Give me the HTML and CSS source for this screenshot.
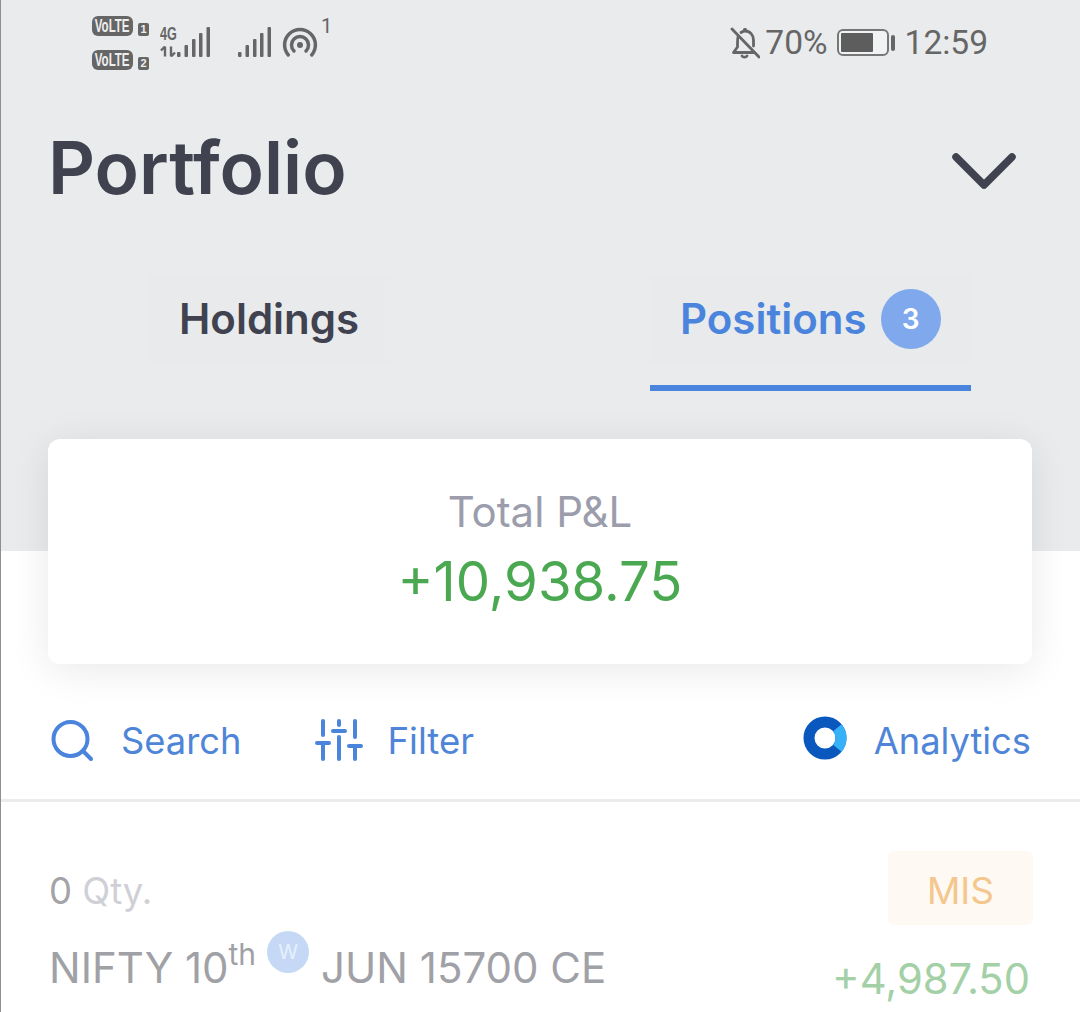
FILE: index.html
```html
<!DOCTYPE html>
<html lang="en">
<head>
<meta charset="utf-8">
<title>Portfolio</title>
<link rel="stylesheet" href="styles.css">
</head>
<body>
<div class="screen">
  <header class="top">
    <div class="status">
      <div class="status-left">
        <div class="volte-stack">
          <div class="volte-row"><span class="volte"><span class="volte-text">VoLTE</span></span><span class="sim">1</span></div>
          <div class="volte-row"><span class="volte"><span class="volte-text">VoLTE</span></span><span class="sim">2</span></div>
        </div>
        <div class="net">
          <span class="net-4g">4G</span>
          <svg class="net-arrows" width="17" height="11" viewBox="0 0 17 11"><path d="M5 0.500V10.500M5 0.500L1 4.500M11 0.500V10.500M11 10.500L15 6.500" fill="none" stroke="#666" stroke-width="2.400"/></svg>
        </div>
        <svg class="sig1" width="33" height="31" viewBox="0 0 33 31"><g fill="#666"><rect x="0" y="25" width="3.500" height="5" rx="1"/><rect x="7.500" y="18" width="3.500" height="12" rx="1"/><rect x="15" y="12" width="3.500" height="18" rx="1"/><rect x="22" y="6" width="3.500" height="24" rx="1"/><rect x="29.500" y="0" width="3.500" height="30" rx="1"/></g></svg>
        <svg class="sig2" width="33" height="31" viewBox="0 0 33 31"><g fill="#666"><rect x="0" y="25" width="3.500" height="5" rx="1"/><rect x="7.500" y="18" width="3.500" height="12" rx="1"/><rect x="15" y="12" width="3.500" height="18" rx="1"/><rect x="22" y="6" width="3.500" height="24" rx="1"/><rect x="29.500" y="0" width="3.500" height="30" rx="1"/></g></svg>
        <svg class="hotspot" width="36" height="32" viewBox="0 0 36 32"><g fill="none" stroke="#666" stroke-width="3.500" stroke-linecap="round"><path d="M6.300 29A15.400 15.400 0 1 1 29.700 29"/><path d="M12 25A8.500 8.500 0 1 1 24 25"/></g><circle cx="18" cy="19" r="3" fill="#666"/></svg>
        <span class="hot-count">1</span>
      </div>
      <div class="status-right">
        <svg class="bell" width="30" height="32" viewBox="0 0 30 32"><g fill="none" stroke="#666" stroke-width="2.800" stroke-linecap="round" stroke-linejoin="round"><path d="M2 2L29 30"/><path d="M8 10C7.500 12 7.500 14 7.500 16V20L3.500 25.500H24"/><path d="M11 5.500C12.500 4.500 14 4 15 4C20 4 23.500 8 23.500 13V19"/><path d="M12 29C13 30.500 16 30.500 17 29"/><path d="M14.500 2.500H15.500"/></g></svg>
        <span class="st-text pct">70%</span>
        <span class="batt"><span class="batt-fill"></span></span><span class="batt-cap"></span>
        <span class="st-text time">12:59</span>
      </div>
    </div>
    <div class="title-row">
      <h1 class="title">Portfolio</h1>
      <svg class="chev" width="64" height="38" viewBox="0 0 64 38"><path d="M4 5L32 33L60 5" fill="none" stroke="#40424f" stroke-width="7.500" stroke-linecap="round" stroke-linejoin="round"/></svg>
    </div>
    <nav class="tabs">
      <div class="tab"><span class="tab-label">Holdings</span></div>
      <div class="tab active"><span class="tab-label">Positions</span><span class="badge">3</span></div>
    </nav>
  </header>

  <section class="card">
    <div class="card-label">Total P&amp;L</div>
    <div class="card-value">+10,938.75</div>
  </section>

  <div class="tools">
    <div class="tool search">
      <svg width="44" height="42" viewBox="0 0 44 42"><g fill="none" stroke="#4b84dc" stroke-width="4" stroke-linecap="round"><circle cx="20.500" cy="19" r="17"/><path d="M33 31L41 39"/></g></svg>
      <span>Search</span>
    </div>
    <div class="tool filter">
      <svg width="48" height="42" viewBox="0 0 48 42"><g fill="none" stroke="#4b84dc" stroke-width="4" stroke-linecap="round"><path d="M8 2V16M8 26V40M24 2V6M24 18V40M40 2V18M40 28V40"/><path d="M2 24H14M18 12H30M34 27H46" /></g></svg>
      <span>Filter</span>
    </div>
    <div class="tool analytics">
      <svg width="44" height="44" viewBox="0 0 44 44"><circle cx="22" cy="22" r="16" fill="none" stroke="#0a57bd" stroke-width="11"/><path d="M34.300 11.700A16 16 0 0 1 34.300 32.300" fill="none" stroke="#36b1f8" stroke-width="11"/></svg>
      <span>Analytics</span>
    </div>
  </div>

  <article class="position">
    <div class="pos-left">
      <div class="qty"><span class="qty-n">0</span> <span class="qty-l">Qty.</span></div>
      <div class="sym">NIFTY 10<sup class="ord">th</sup><span class="weekly">W</span>JUN 15700 CE</div>
    </div>
    <div class="pos-right">
      <span class="mis">MIS</span>
      <span class="pnl">+4,987.50</span>
    </div>
  </article>
</div>
</body>
</html>
```
FILE: styles.css
```css
* { box-sizing: border-box; }
html, body { margin: 0; padding: 0; background: #fff; }
body { font-family: Inter, "Liberation Sans", sans-serif; }
.screen {
  width: 1080px;
  height: 1012px;
  overflow: hidden;
  border-left: 1px solid #8f8f8f;
  background: #fff;
}
.top {
  height: 551px;
  background: #e9ebed;
  display: flex;
  flex-direction: column;
}
.status {
  height: 85px;
  display: flex;
  justify-content: space-between;
  padding: 0 92px 0 91px;
  color: #666;
}
.status-left { display: flex; align-items: flex-start; }
.volte-stack { display: flex; flex-direction: column; gap: 14px; margin-top: 16px; }
.volte-row { display: flex; align-items: flex-end; gap: 5px; height: 20px; }
.volte {
  width: 41px; height: 20px;
  background: #666; color: #eee;
  border-radius: 6px;
  display: flex;
  justify-content: center;
  overflow: hidden;
}
.volte-text {
  display: block;
  font: 700 18px/20px "Liberation Sans", sans-serif;
  transform: scaleX(.64);
  transform-origin: center;
}
.sim {
  width: 11px; height: 13px;
  background: #666; color: #eee;
  border-radius: 2px;
  font: 700 11px/13px "Liberation Sans", sans-serif;
  text-align: center;
}
.net { width: 17px; margin: 27px 0 0 11px; display: flex; flex-direction: column; gap: 4px; }
.net-4g {
  font: 700 18px/15px "Liberation Sans", sans-serif;
  color: #666;
  transform: scaleX(.7);
  transform-origin: left center;
}
.net-arrows { display: block; }
.sig1 { margin: 27px 0 0 0; }
.sig2 { margin: 27px 0 0 28px; }
.hotspot { margin: 26px 0 0 11px; }
.hot-count { font: 400 20px/20px Roboto, sans-serif; color: #666; margin: 16px 0 0 3px; }
.status-right { display: flex; align-items: center; height: 85px; }
.bell { margin-right: 5px; }
.st-text { font: 400 33.500px/85px Roboto, sans-serif; color: #666; }
.batt {
  width: 52px; height: 27px;
  border: 2px solid #777; border-radius: 6px;
  padding: 2px; margin-left: 9px;
  background: #f1f2f3;
}
.batt-fill { display: block; width: 32px; height: 19px; background: #5d5d5d; border-radius: 1px; }
.batt-cap { width: 4px; height: 16px; background: #666; border-radius: 2px; margin-left: 2px; }
.time { margin-left: 10px; }
.title-row {
  display: flex;
  justify-content: space-between;
  align-items: center;
  padding: 0 64px 0 47px;
  height: 110px;
  margin-top: 28px;
}
.title { margin: 0; font-size: 73px; font-weight: 600; line-height: 110px; color: #40424f; }
.chev { display: block; margin-top: 6px; }
.tabs {
  display: flex;
  padding: 0 109px 0 146px;
  justify-content: space-between;
  margin-top: 52px;
}
.tab {
  height: 118px;
  display: flex;
  align-items: flex-start;
  padding: 14px 32px 0;
  gap: 14px;
  background: linear-gradient(#e8eaec 0 0) no-repeat 0 0 / 100% 88px;
}
.tab-label { font-size: 42px; font-weight: 600; line-height: 60px; color: #40424f; }
.tab.active { border-bottom: 6px solid #4b84dc; width: 321px; padding: 14px 0 0 30px; height: 116px; }
.tab.active .tab-label { color: #4b84dc; }
.badge {
  width: 60px; height: 60px;
  border-radius: 50%;
  background: #7fa9ec;
  color: #fff;
  font-size: 28px;
  font-weight: 600;
  line-height: 60px;
  text-align: center;
}
.card {
  width: 984px;
  height: 225px;
  margin: -112px 0 0 47px;
  position: relative;
  background: #fff;
  border-radius: 12px;
  box-shadow: 0 6px 40px rgba(0,0,0,.09);
  text-align: center;
  padding-top: 46px;
}
.card-label { font-size: 42px; line-height: 54px; color: #9c9dac; }
.card-value { font-size: 54.500px; line-height: 70px; color: #4aa851; margin-top: 7px; }
.tools {
  height: 138px;
  border-bottom: 3px solid #ececec;
  display: flex;
  align-items: flex-start;
  padding: 54px 49px 0 49px;
}
.tool { display: flex; align-items: center; height: 44px; font-size: 36.300px; line-height: 44px; color: #4f85d8; }
.search { gap: 27px; }
.search svg { margin-top: 1px; }
.filter { gap: 24px; margin-left: 74px; font-size: 36.600px; }
.analytics { gap: 27px; margin-left: auto; }
.analytics svg { margin-top: -4px; }
.tool span { margin-top: 2px; }
.position {
  display: flex;
  justify-content: space-between;
  padding: 49px 47px 0 48px;
}
.qty { font-size: 36.500px; line-height: 44px; margin-top: 18px; }
.qty-n { color: #a3a3a8; }
.qty-l { color: #cfd0d6; }
.sym {
  font-size: 42px; line-height: 60px;
  color: #a0a1a6;
  margin-top: 25px;
  display: flex;
  align-items: flex-start;
  white-space: nowrap;
}
.ord { font-size: 30px; line-height: 30px; margin-top: 1px; }
.weekly {
  width: 42px; height: 42px;
  border-radius: 50%;
  background: #c5d9f7;
  color: #e8f0fc;
  font-size: 20px;
  line-height: 42px;
  text-align: center;
  margin: -7px 12px 0 11px;
}
.pos-right { display: flex; flex-direction: column; align-items: flex-end; }
.mis {
  width: 145px; height: 74px;
  background: #fff9f4;
  border-radius: 6px;
  color: #f3c78d;
  font-size: 37px;
  line-height: 80px;
  text-align: center;
}
.pnl { font-size: 41.700px; line-height: 50px; color: #a3d0a6; margin-top: 29px; margin-right: 3px; }
```
